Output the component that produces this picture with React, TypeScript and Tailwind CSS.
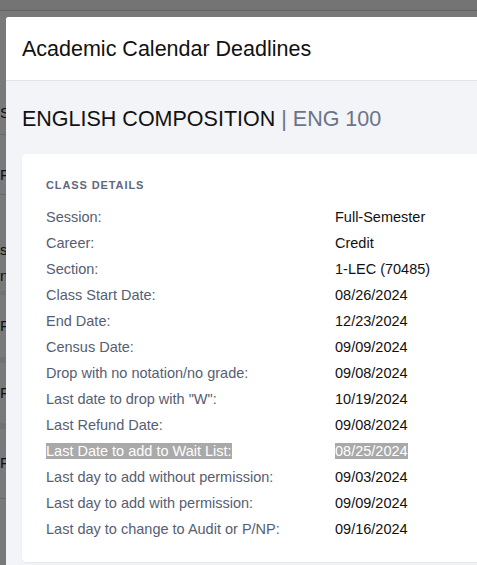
import React from "react";

const rows: { label: string; value: string; selected?: boolean }[] = [
  { label: "Session:", value: "Full-Semester" },
  { label: "Career:", value: "Credit" },
  { label: "Section:", value: "1-LEC (70485)" },
  { label: "Class Start Date:", value: "08/26/2024" },
  { label: "End Date:", value: "12/23/2024" },
  { label: "Census Date:", value: "09/09/2024" },
  { label: "Drop with no notation/no grade:", value: "09/08/2024" },
  { label: 'Last date to drop with "W":', value: "10/19/2024" },
  { label: "Last Refund Date:", value: "09/08/2024" },
  { label: "Last Date to add to Wait List:", value: "08/25/2024", selected: true },
  { label: "Last day to add without permission:", value: "09/03/2024" },
  { label: "Last day to add with permission:", value: "09/09/2024" },
  { label: "Last day to change to Audit or P/NP:", value: "09/16/2024" },
];

// page behind the dialog, only a sliver of it shows on the left
const BackgroundPage: React.FC = () => (
  <div className="flex h-[565px] flex-col bg-[#f2f2f2] text-[15px] text-[#222]">
    <div className="h-[11px] border-b border-[#c8c8c8] bg-[#e8e8e8]" />
    <div className="flex h-[124px] flex-col border-b border-[#d4d4d4] pl-[8px] pt-[34px]">
      <div className="h-[20px] w-[8px] bg-[#7a1f1f]" />
      <span className="mt-[40px] -ml-[8px] leading-none">Si</span>
    </div>
    <div className="flex h-[60px] items-end border-b border-[#d4d4d4] pb-[8px]">F</div>
    <div className="flex h-[100px] flex-col justify-end border-b-[4px] border-[#e4e4e4] pb-[2px] leading-[26px]">
      <span>st</span>
      <span>n.</span>
    </div>
    <div className="flex h-[68px] items-center border-b-[6px] border-[#e4e4e4]">F</div>
    <div className="flex h-[66px] items-center border-b-[6px] border-[#e4e4e4]">F</div>
    <div className="flex h-[70px] items-center border-b border-[#d4d4d4]">F</div>
  </div>
);

export default function App() {
  return (
    <div className="relative h-[565px] w-[477px] overflow-hidden font-['Liberation_Sans',Arial,sans-serif]">
      <BackgroundPage />
      <div className="absolute inset-0 bg-black/50" />

      <div className="absolute left-[6px] top-[17px] w-[540px] overflow-hidden rounded-t-[3px] bg-[#f3f4f8]">
        <div className="flex h-[64px] items-center border-b border-[#e0e3ea] bg-white px-[16px] pt-[2px]">
          <h1 className="text-[21.5px] text-[#111]">Academic Calendar Deadlines</h1>
        </div>

        <div className="px-[16px] pb-[20px] pt-[26px]">
          <h2 className="text-[21.5px] leading-[25px] text-[#111]">
            ENGLISH COMPOSITION<span className="text-[#6b7389]"> | ENG 100</span>
          </h2>

          <div className="mt-[22px] rounded-[4px] bg-white px-[24px] pb-[19px] pt-[23px] shadow-[0_1px_2px_rgba(0,0,0,0.06)]">
            <div className="mb-[12px] text-[11px] font-bold leading-[16px] tracking-[0.9px] text-[#5f6880]">
              CLASS DETAILS
            </div>
            {rows.map((r) => (
              <div key={r.label} className="flex h-[26px] items-center text-[14.5px]">
                <div className="w-[289px] shrink-0 text-[#565e73]">
                  <span className={r.selected ? "bg-[#a9a9a9] text-white" : ""}>{r.label}</span>
                </div>
                <div className="text-[#111]">
                  <span className={r.selected ? "bg-[#a9a9a9] text-white" : ""}>{r.value}</span>
                </div>
              </div>
            ))}
          </div>
        </div>
      </div>
    </div>
  );
}
